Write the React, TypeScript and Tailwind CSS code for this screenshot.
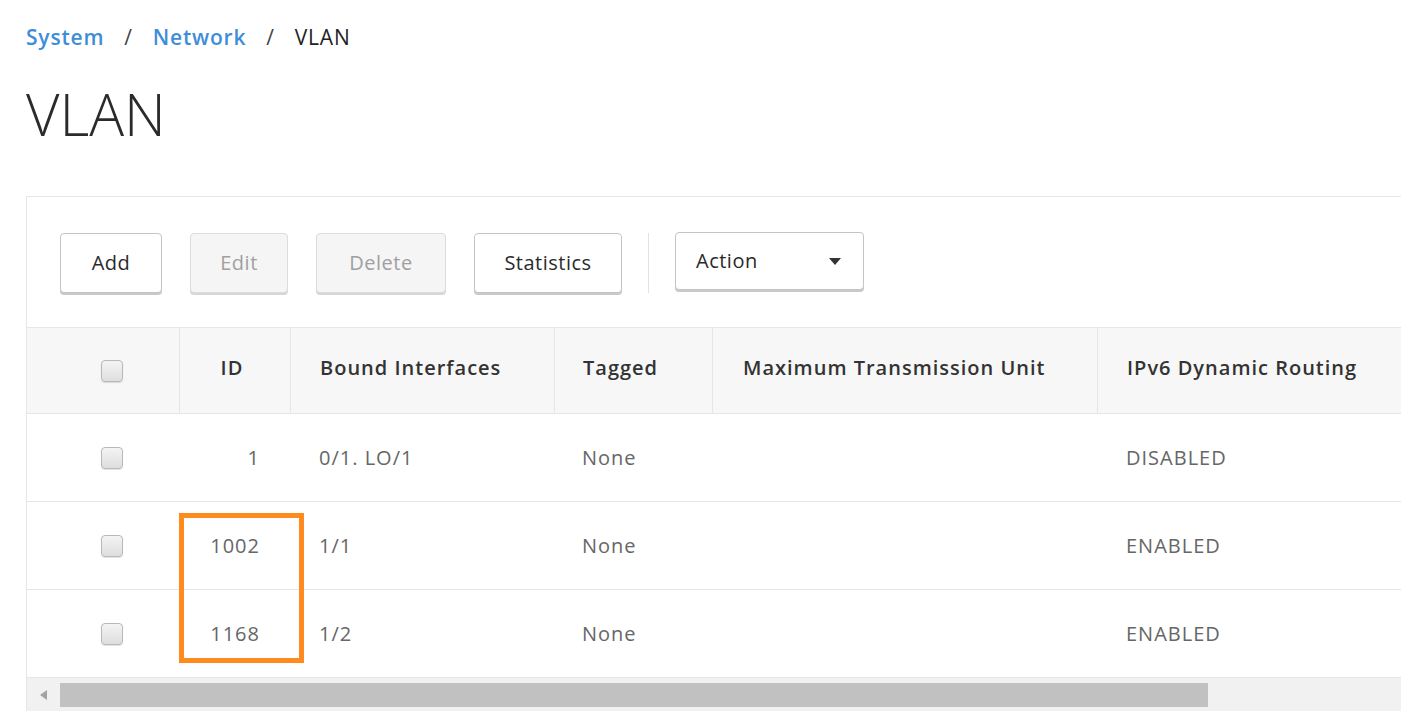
import React from 'react';

const cols = 'grid grid-cols-[152px_111px_264px_158px_385px_1fr]';

const Checkbox: React.FC = () => (
  <span className="block w-[22px] h-[22px] rounded-[4px] border border-[#b8b8b8] bg-gradient-to-b from-[#f4f4f4] to-[#dedede] shadow-[0_1px_1px_rgba(0,0,0,0.12)]" />
);

const Button: React.FC<{ label: string; disabled?: boolean; width: string }> = ({ label, disabled, width }) => (
  <button
    className={`${width} h-[60px] rounded-[4px] border text-[20px] tracking-[0.5px] ${
      disabled
        ? 'border-[#dcdcdc] bg-[#f5f5f5] text-[#a0a0a0] shadow-[0_2px_0_#d6d6d6]'
        : 'border-[#c4c4c4] bg-white text-[#2a2a2a] shadow-[0_2px_0_#c9c9c9]'
    }`}
  >
    {label}
  </button>
);

const App: React.FC = () => {
  const rows = [
    { id: '1', bound: '0/1. LO/1', tagged: 'None', ipv6: 'DISABLED' },
    { id: '1002', bound: '1/1', tagged: 'None', ipv6: 'ENABLED' },
    { id: '1168', bound: '1/2', tagged: 'None', ipv6: 'ENABLED' },
  ];

  return (
    <div className="min-h-screen bg-white pl-[26px] pt-[22px] font-['Open_Sans',sans-serif] w-[1428px] h-[726px] overflow-hidden">
      <div className="flex items-center gap-[20px] text-[21px] leading-[30px] h-[30px] tracking-[0.8px]">
        <span className="text-[#3e8ed7] font-semibold">System</span>
        <span className="text-[#444]">/</span>
        <span className="text-[#3e8ed7] font-semibold">Network</span>
        <span className="text-[#444]">/</span>
        <span className="text-[#222]">VLAN</span>
      </div>

      <h1 className="mt-[30px] text-[58px] leading-[64px] font-light text-[#2b2b2b]">VLAN</h1>

      <div className="mt-[50px] w-[1375px] border-t border-l border-[#e6e6e6] relative">
        <div className="h-[130px] flex items-center pl-[33px] pt-[2px] gap-[28px]">
          <Button label="Add" width="w-[102px]" />
          <Button label="Edit" width="w-[98px]" disabled />
          <Button label="Delete" width="w-[130px]" disabled />
          <Button label="Statistics" width="w-[148px]" />
          <span className="w-px h-[60px] bg-[#e2e2e2] -mx-[2px]" />
          <button className="w-[189px] h-[58px] -mt-[4px] rounded-[4px] border border-[#c4c4c4] bg-white shadow-[0_2px_0_#c9c9c9] flex items-center justify-between pl-[20px] pr-[22px] text-[20px] tracking-[0.5px] text-[#2a2a2a]">
            <span>Action</span>
            <svg width="12" height="7" viewBox="0 0 12 7">
              <path d="M0 0h12L6 7z" fill="#333" />
            </svg>
          </button>
        </div>

        <div className={`${cols} h-[87px] bg-[#f7f7f7] border-t border-b border-[#e6e6e6] text-[20px] font-semibold tracking-[1px] text-[#333]`}>
          <div className="flex items-center justify-center pl-[18px]">
            <Checkbox />
          </div>
          <div className="flex items-center justify-center border-l border-[#e6e6e6] pr-[6px] pb-[6px]">ID</div>
          <div className="flex items-center pl-[29px] border-l border-[#e6e6e6] pb-[6px]">Bound Interfaces</div>
          <div className="flex items-center pl-[28px] border-l border-[#e6e6e6] pb-[6px]">Tagged</div>
          <div className="flex items-center pl-[30px] border-l border-[#e6e6e6] pb-[6px]">Maximum Transmission Unit</div>
          <div className="flex items-center pl-[29px] border-l border-[#e6e6e6] pb-[6px]">IPv6 Dynamic Routing</div>
        </div>

        {rows.map((r) => (
          <div key={r.id} className={`${cols} h-[88px] border-b border-[#e6e6e6] text-[20px] tracking-[1px] text-[#666]`}>
            <div className="flex items-center justify-center pl-[18px]">
              <Checkbox />
            </div>
            <div className="flex items-center justify-end pr-[30px]">{r.id}</div>
            <div className="flex items-center pl-[29px]">{r.bound}</div>
            <div className="flex items-center pl-[28px]">{r.tagged}</div>
            <div />
            <div className="flex items-center pl-[29px]">{r.ipv6}</div>
          </div>
        ))}

        <div className="h-[33px] bg-[#f1f1f1] flex items-center">
          <div className="w-[33px] flex items-center justify-center">
            <svg width="7" height="10" viewBox="0 0 7 10">
              <path d="M7 0v10L0 5z" fill="#a3a3a3" />
            </svg>
          </div>
          <div className="w-[1148px] h-[24px] bg-[#c1c1c1]" />
        </div>

        <div className="absolute left-[152px] top-[316px] w-[125px] h-[150px] border-[5px] border-[#ff8a1e]" />
      </div>
    </div>
  );
};

export default App;
